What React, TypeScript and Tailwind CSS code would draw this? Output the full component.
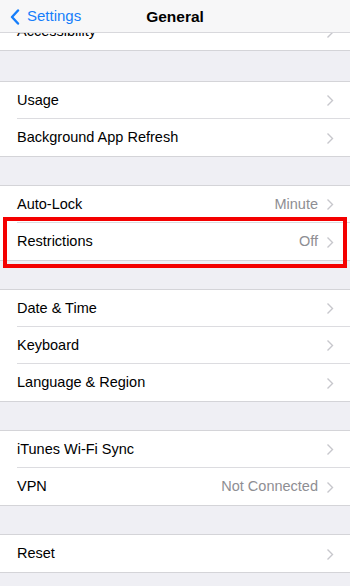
import React from "react";

const Chevron = () => (
  <svg width="8" height="13" viewBox="0 0 8 13" className="shrink-0">
    <polyline points="1.5,1.5 6.5,6.5 1.5,11.5" fill="none" stroke="#c7c7cc" strokeWidth="1.4" />
  </svg>
);

type RowProps = { label: string; value?: string; last?: boolean };

const Row = ({ label, value, last }: RowProps) => (
  <div className="h-[37px] bg-white pl-[17px]">
    <div className={`h-full flex items-center pt-[1px] pr-[16px] ${last ? "" : "border-b border-[#dcdce0]"}`}>
      <span className="flex-1 text-[14.5px] text-black">{label}</span>
      {value && <span className="text-[14.5px] text-[#8e8e93] mr-[8px]">{value}</span>}
      <Chevron />
    </div>
  </div>
);

const Group = ({ rows }: { rows: RowProps[] }) => (
  <div className="border-y border-[#d4d4d8] bg-white">
    {rows.map((r, i) => (
      <Row key={r.label} {...r} last={i === rows.length - 1} />
    ))}
  </div>
);

export default function App() {
  return (
    <div
      className="relative w-[350px] h-[586px] overflow-hidden bg-[#efeff4]"
      style={{ fontFamily: '"Liberation Sans", Arial, sans-serif' }}
    >
      <div className="h-[33px] bg-[#f7f7f8] border-b border-[#d8d8dc] relative flex items-center">
        <div className="flex items-center pl-[10px] pt-[1px] text-[#157efb]">
          <svg width="10" height="16" viewBox="0 0 10 16">
            <polyline points="8,1.5 2,8 8,14.5" fill="none" stroke="#157efb" strokeWidth="2.4" strokeLinecap="round" strokeLinejoin="round" />
          </svg>
          <span className="ml-[7px] text-[15px]">Settings</span>
        </div>
        <div className="absolute inset-0 flex items-center justify-center pt-[1px] pointer-events-none">
          <span className="text-[15.5px] font-semibold text-black">General</span>
        </div>
      </div>
      <div className="h-[18px] overflow-hidden bg-white border-b border-[#d4d4d8]">
        <div className="-mt-[20px]">
          <Row label="Accessibility" last />
        </div>
      </div>
      <div className="h-[30px]" />
      <Group rows={[{ label: "Usage" }, { label: "Background App Refresh" }]} />
      <div className="h-[28px]" />
      <Group rows={[{ label: "Auto-Lock", value: "Minute" }, { label: "Restrictions", value: "Off" }]} />
      <div className="h-[28px]" />
      <Group rows={[{ label: "Date & Time" }, { label: "Keyboard" }, { label: "Language & Region" }]} />
      <div className="h-[28px]" />
      <Group rows={[{ label: "iTunes Wi-Fi Sync" }, { label: "VPN", value: "Not Connected" }]} />
      <div className="h-[28px]" />
      <Group rows={[{ label: "Reset" }]} />
      <div className="absolute left-[3px] top-[217px] w-[344px] h-[51px] border-[4px] border-[#f40000]" />
    </div>
  );
}
